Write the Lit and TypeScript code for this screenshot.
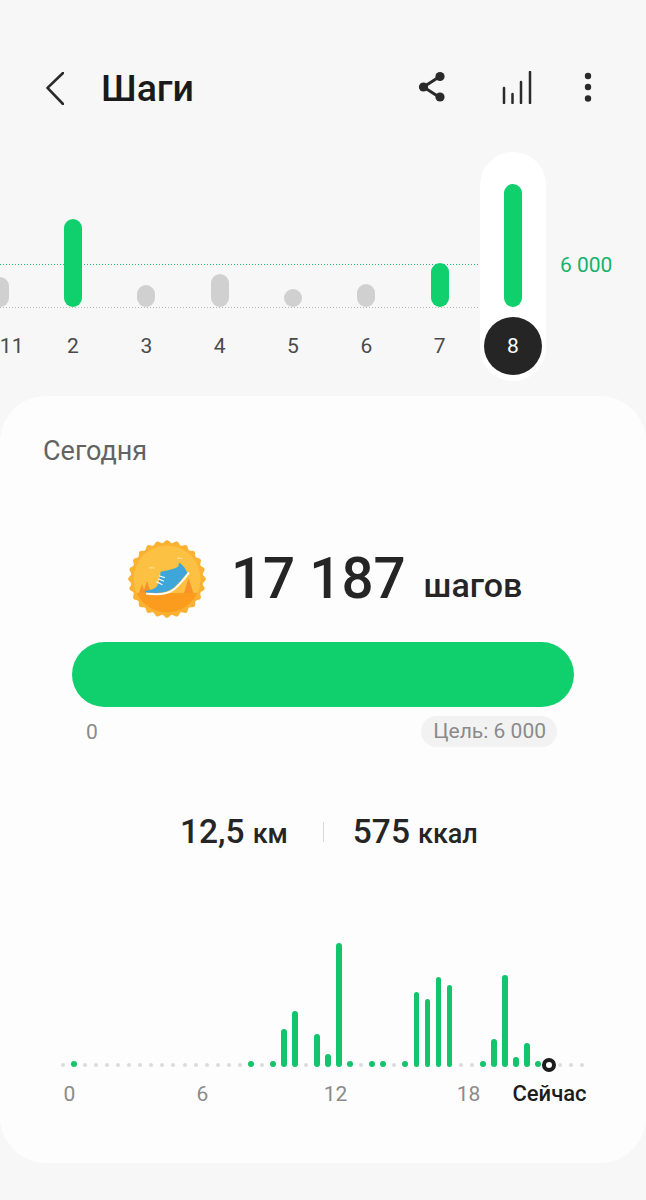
import { LitElement, html, css, svg } from 'lit';
import { customElement } from 'lit/decorators.js';

type Day = { label: string; h: number; on?: boolean; selected?: boolean };

const DAYS: Day[] = [
  { label: '11', h: 30 },
  { label: '2', h: 88, on: true },
  { label: '3', h: 22 },
  { label: '4', h: 33 },
  { label: '5', h: 18 },
  { label: '6', h: 23 },
  { label: '7', h: 44, on: true },
  { label: '8', h: 123, on: true, selected: true },
];

// half-hour slots: slot index -> bar height, 0 means a green dot
const ACTIVE: Record<number, number> = {
  1: 0, 17: 0, 19: 0, 20: 38, 21: 56, 23: 33, 24: 13, 25: 124, 26: 0, 28: 0, 29: 0, 31: 0,
  32: 75, 33: 68, 34: 90, 35: 82, 38: 0, 39: 28, 40: 92, 41: 10, 42: 24, 43: 0,
};
const NOW_SLOT = 44;

const scallop = () => {
  const pts: string[] = [];
  for (let i = 0; i < 240; i++) {
    const a = (i / 240) * Math.PI * 2;
    const r = 37.5 + 1.4 * Math.cos(a * 24);
    pts.push(`${(40 + r * Math.sin(a)).toFixed(2)},${(40 - r * Math.cos(a)).toFixed(2)}`);
  }
  return pts.join(' ');
};

@customElement('app-root')
export class AppRoot extends LitElement {
  static styles = css`
    :host {
      display: block;
      width: 646px;
      height: 1200px;
      overflow: hidden;
      background: #f7f7f7;
      color: #252525;
      font-family: Roboto, 'Noto Sans', sans-serif;
    }

    .header {
      display: flex;
      align-items: center;
      height: 96px;
      margin-top: 40px;
      padding-left: 46px;
    }
    .header h1 {
      margin: 0 0 0 37px;
      font-size: 37.5px;
      font-weight: 500;
      line-height: 96px;
      color: #1a1a1a;
    }
    .header svg {
      display: block;
      fill: none;
      stroke: #2a2a2a;
    }
    .actions {
      display: flex;
      align-items: center;
      margin-left: auto;
      padding: 0 54px 2px 0;
    }
    .actions .stats {
      margin-left: 56px;
    }
    .actions .more {
      margin-left: 52px;
    }

    .week {
      position: relative;
      height: 229px;
      margin-top: 16px;
      margin-bottom: 15px;
    }
    .guide {
      position: absolute;
      left: 0;
      width: 480px;
      height: 1px;
    }
    .guide.goal {
      top: 112px;
      background: repeating-linear-gradient(90deg, #23b873 0 1px, transparent 1px 3px);
    }
    .guide.base {
      top: 155px;
      background: repeating-linear-gradient(90deg, #b5b5b5 0 1px, transparent 1px 3px);
    }
    .goal-label {
      position: absolute;
      left: 560px;
      top: 100px;
      font-size: 21px;
      line-height: 26px;
      color: #17b26c;
    }
    .days {
      position: relative;
      display: flex;
      margin-left: -37px;
    }
    .day {
      position: relative;
      width: 73.33px;
      display: flex;
      flex-direction: column;
      align-items: center;
    }
    .day.selected::before {
      content: '';
      position: absolute;
      left: 3.5px;
      top: 0;
      width: 66.5px;
      height: 229px;
      border-radius: 34px;
      background: #fff;
    }
    .plot {
      position: relative;
      height: 155px;
      display: flex;
      align-items: flex-end;
    }
    .bar {
      width: 18px;
      border-radius: 9px;
      background: #d0d0d0;
    }
    .bar.on {
      background: #10d06e;
    }
    .day-label {
      position: relative;
      width: 58px;
      height: 58px;
      margin-top: 10px;
      border-radius: 50%;
      font-size: 21px;
      line-height: 58px;
      text-align: center;
      color: #4a4a4a;
    }
    .day:first-child .day-label {
      margin-left: 24px;
    }
    .day.selected .day-label {
      background: #252525;
      color: #fff;
    }

    .card {
      height: 767px;
      border-radius: 46px;
      background: #fdfdfd;
      overflow: hidden;
    }
    .today {
      margin-top: 40px;
      padding-left: 43px;
      font-size: 27px;
      line-height: 30px;
      color: #636363;
    }
    .summary {
      display: flex;
      align-items: center;
      height: 80px;
      margin-top: 73px;
      padding-left: 127px;
    }
    .summary svg {
      display: block;
      flex: none;
    }
    .count {
      margin-left: 24px;
      font-size: 56.5px;
      font-weight: 500;
      line-height: 80px;
    }
    .count-unit {
      margin-left: 18px;
      padding-top: 12px;
      font-size: 34px;
      font-weight: 500;
      line-height: 36px;
    }
    .progress {
      height: 65px;
      margin: 23px 72px 0;
      border-radius: 33px;
      background: #10d06e;
    }
    .scale {
      display: flex;
      align-items: center;
      justify-content: space-between;
      height: 31px;
      margin-top: 9px;
      padding: 0 89px 0 86px;
      font-size: 21px;
      color: #8a8a8a;
    }
    .target {
      padding: 0 11px 0 12px;
      border-radius: 16px;
      background: #f2f2f2;
      line-height: 31px;
    }
    .totals {
      display: flex;
      align-items: baseline;
      height: 40px;
      margin-top: 65px;
      padding-left: 180px;
      line-height: 40px;
      font-weight: 500;
      font-size: 33.5px;
    }
    .totals small {
      margin-left: 8px;
      font-size: 27px;
      font-weight: 500;
    }
    .divider {
      width: 1px;
      height: 20px;
      margin: 0 29px 0 35px;
      background: #d8d8d8;
      align-self: center;
    }
    .hours {
      display: flex;
      align-items: flex-end;
      height: 127px;
      margin-top: 88px;
      padding-left: 57.5px;
    }
    .slot {
      position: relative;
      width: 11.05px;
      display: flex;
      justify-content: center;
      align-items: flex-end;
    }
    .slot i {
      display: block;
      width: 4px;
      height: 4px;
      border-radius: 50%;
      background: #dcdcdc;
    }
    .slot i.dot {
      width: 6px;
      height: 6px;
      background: #14c46c;
    }
    .slot i.tall {
      width: 5.5px;
      border-radius: 3px;
      background: #14c46c;
    }
    .slot i.now {
      flex: none;
      box-sizing: border-box;
      width: 14px;
      height: 14px;
      margin-bottom: -5px;
      border: 4px solid #1c1c1c;
      background: #fff;
    }
    .axis {
      display: flex;
      height: 26px;
      margin-top: 14px;
      padding-left: 69.5px;
      font-size: 21px;
      line-height: 26px;
      color: #8a8a8a;
    }
    .tick {
      width: 0;
      margin-right: 133px;
      display: flex;
      justify-content: center;
      white-space: nowrap;
    }
    .tick.now {
      margin-left: -52px;
      margin-right: 0;
      font-size: 22px;
      font-weight: 500;
      color: #1c1c1c;
    }
  `;

  private _badge() {
    return html`<svg width="80" height="80" viewBox="0 0 80 80">
      ${svg`
        <defs>
          <clipPath id="inner"><circle cx="40" cy="40" r="33.5"></circle></clipPath>
        </defs>
        <polygon points=${scallop()} fill="#fbb232"></polygon>
        <g clip-path="url(#inner)">
          <rect x="0" y="0" width="80" height="80" fill="#fcc142"></rect>
          <path d="M22 29.500a2 2 0 0 1 3.500-1 1.800 1.800 0 0 1 2.500 1ZM50 20a2 2 0 0 1 3.500-1 1.800 1.800 0 0 1 2.500 1Z" fill="#fddc92"></path>
          <path d="M12 54l3-9 3 9ZM16 54l4-12 4 12ZM57 54l4.500-15 5 15Z" fill="#f9922a"></path>
          <rect x="0" y="54" width="80" height="26" fill="#fb9c1f"></rect>
        </g>
        <path d="M19 54.500C30 56 40 55.500 46 51 52 46.500 58 39 62 33.500" fill="none" stroke="#fff" stroke-width="2"></path>
        <path d="M18 52C23 51 27 50 29.700 47.700 32 44 33 38 33.700 32.700 35 32.500 36.500 32 38 31.700 42 31 47 30 51.300 27.700L52 23.700C54.500 25 56.500 27 58 29.300L60.300 33.700C56 39 51 45 46.300 49.300 42 52 37 53.500 33 53.700 28 54 22 54 18 53.300Z" fill="#3ea6d8"></path>
        <path d="M32.500 37l5 1.500M31.500 40l5 2M30 43l5 2.500" stroke="#fff" stroke-width="1.200" fill="none" stroke-linecap="round"></path>
      `}
    </svg>`;
  }

  render() {
    const slots = Array.from({ length: 48 }, (_, i) => i);
    return html`
      <div class="header">
        <svg width="18" height="33" viewBox="0 0 18 33">
          <path d="M17 1 1.500 15.900 17 32" stroke-width="2.600" stroke-linecap="round" stroke-linejoin="round"></path>
        </svg>
        <h1>Шаги</h1>
        <div class="actions">
          <svg width="28" height="32" viewBox="0 0 28 32">
            <path d="M5.500 16 21 6M5.500 16 21 26" stroke-width="3"></path>
            <circle cx="5.500" cy="16" r="4.600" fill="#2a2a2a" stroke="none"></circle>
            <circle cx="22" cy="5.500" r="4.600" fill="#2a2a2a" stroke="none"></circle>
            <circle cx="22" cy="26" r="4.600" fill="#2a2a2a" stroke="none"></circle>
          </svg>
          <svg class="stats" width="30" height="33" viewBox="0 0 30 33">
            <path d="M2 32V17M10.500 32V23M19 32V11M28 32V1" stroke-width="2.500" stroke-linecap="round"></path>
          </svg>
          <svg class="more" width="8" height="30" viewBox="0 0 8 30">
            <circle cx="4" cy="4" r="3.200" fill="#2a2a2a" stroke="none"></circle>
            <circle cx="4" cy="15" r="3.200" fill="#2a2a2a" stroke="none"></circle>
            <circle cx="4" cy="26.500" r="3.200" fill="#2a2a2a" stroke="none"></circle>
          </svg>
        </div>
      </div>

      <div class="week">
        <div class="guide goal"></div>
        <div class="guide base"></div>
        <div class="goal-label">6 000</div>
        <div class="days">
          ${DAYS.map(
            (d) => html`<div class="day ${d.selected ? 'selected' : ''}">
              <div class="plot">
                <div class="bar ${d.on ? 'on' : ''}" style="height:${d.h}px"></div>
              </div>
              <div class="day-label">${d.label}</div>
            </div>`,
          )}
        </div>
      </div>

      <div class="card">
        <div class="today">Сегодня</div>
        <div class="summary">
          ${this._badge()}
          <div class="count">17 187</div>
          <div class="count-unit">шагов</div>
        </div>
        <div class="progress"></div>
        <div class="scale">
          <span>0</span>
          <span class="target">Цель: 6 000</span>
        </div>
        <div class="totals">
          <span>12,5</span><small>км</small>
          <span class="divider"></span>
          <span>575</span><small>ккал</small>
        </div>
        <div class="hours">
          ${slots.map((i) => {
            if (i === NOW_SLOT) return html`<div class="slot"><i class="now"></i></div>`;
            const h = ACTIVE[i];
            if (h === undefined) return html`<div class="slot"><i></i></div>`;
            if (h === 0) return html`<div class="slot"><i class="dot"></i></div>`;
            return html`<div class="slot"><i class="tall" style="height:${h}px"></i></div>`;
          })}
        </div>
        <div class="axis">
          <span class="tick">0</span>
          <span class="tick">6</span>
          <span class="tick">12</span>
          <span class="tick">18</span>
          <span class="tick now">Сейчас</span>
        </div>
      </div>
    `;
  }
}
